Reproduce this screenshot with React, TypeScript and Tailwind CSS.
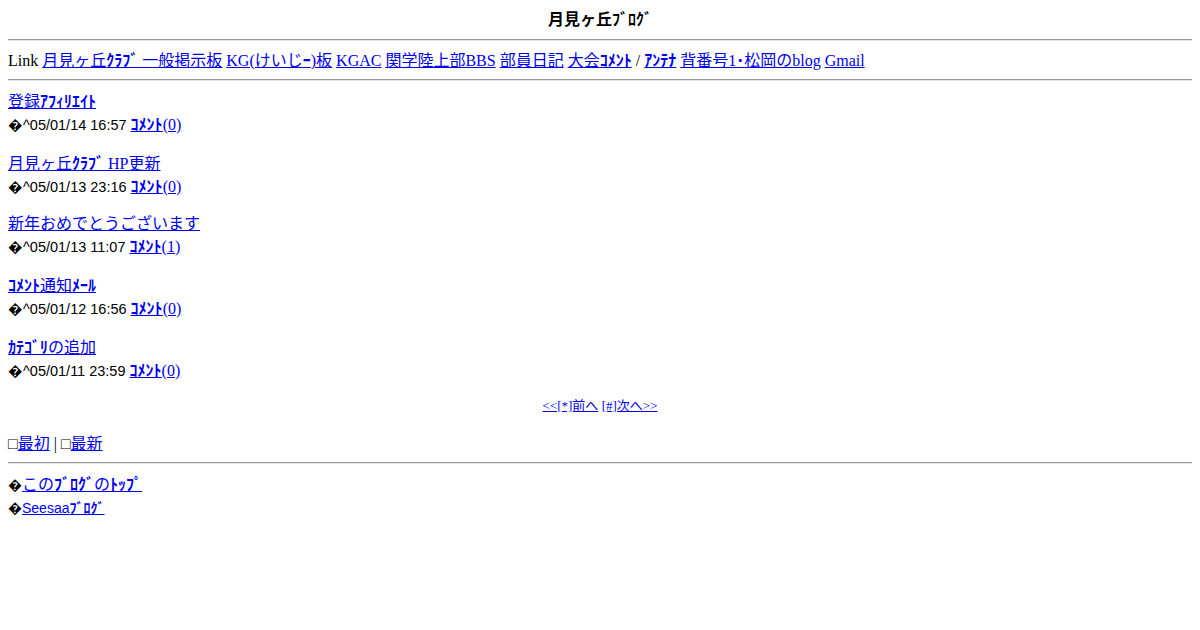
const serif = "font-['Liberation_Serif','Noto_Sans_CJK_JP',serif]";
const sans = "font-['Liberation_Sans','Noto_Sans_CJK_JP',sans-serif]";

// half-width katakana are drawn heavier in the reference
function K({ text }: { text: string }) {
  const parts = text.split(/([\uFF61-\uFF9F]+)/);
  return (
    <>
      {parts.map((p, i) =>
        /[\uFF61-\uFF9F]/.test(p) ? (
          <span key={i} className="font-semibold">{p}</span>
        ) : (
          p
        ),
      )}
    </>
  );
}

function A({ children, className = '' }: { children: string; className?: string }) {
  return (
    <a href="#" className={`text-[#0000ee] underline ${className}`}>
      <K text={children} />
    </a>
  );
}

function Hr({ className = '' }: { className?: string }) {
  return <div className={`h-[2px] border-t border-[#9a9a9a] border-b border-b-[#e6e6e6] ${className}`} />;
}

const entries = [
  { title: '登録ｱﾌｨﾘｴｲﾄ', date: '05/01/14 16:57', n: 0, mt: 'mt-[9px]' },
  { title: '月見ヶ丘ｸﾗﾌﾞ HP更新', date: '05/01/13 23:16', n: 0, mt: 'mt-[16px]' },
  { title: '新年おめでとうございます', date: '05/01/13 11:07', n: 1, mt: 'mt-[14px]' },
  { title: 'ｺﾒﾝﾄ通知ﾒｰﾙ', date: '05/01/12 16:56', n: 0, mt: 'mt-[16px]' },
  { title: 'ｶﾃｺﾞﾘの追加', date: '05/01/11 23:59', n: 0, mt: 'mt-[16px]' },
];

export default function App() {
  return (
    <div className={`w-[1200px] h-[630px] bg-white px-2 pt-2 text-black text-[16px] ${serif}`}>
      <div className={`h-[23px] leading-[23px] text-center font-bold ${sans}`}>月見ヶ丘ﾌﾞﾛｸﾞ</div>
      <Hr className="mt-[8px]" />
      <div className="mt-[8px] h-[23px] leading-[23px] whitespace-nowrap">
        Link <A>{'月見ヶ丘ｸﾗﾌﾞ '}</A> <A>一般掲示板</A> <A>KG(けいじｰ)板</A> <A>KGAC</A>{' '}
        <A>関学陸上部BBS</A> <A>部員日記</A> <A>大会ｺﾒﾝﾄ</A> / <A>ｱﾝﾃﾅ</A>{' '}
        <A>背番号1･松岡のblog</A> <A>Gmail</A>
      </div>
      <Hr className="mt-[7px]" />
      {entries.map((e) => (
        <div key={e.date} className={e.mt}>
          <div className="h-[23px] leading-[23px]">
            <A>{e.title}</A>
          </div>
          <div className="h-[23px] leading-[23px] whitespace-nowrap">
            <span className={`${sans} text-[14.5px]`}>{'\uFFFD'}^{e.date} </span>
            <A>{`ｺﾒﾝﾄ(${e.n})`}</A>
          </div>
        </div>
      ))}
      <div className="mt-[14px] h-[20px] leading-[20px] text-center text-[13px]">
        <A>{'<<[*]前へ'}</A> <A>{'[#]次へ>>'}</A>
      </div>
      <div className="mt-[16px] h-[23px] leading-[23px]">
        □<A>最初</A> | □<A>最新</A>
      </div>
      <Hr className="mt-[7px]" />
      <div className="mt-[9px] h-[23px] leading-[23px]">
        <span className="text-[14px]">{'\uFFFD'}</span>
        <A className={sans}>このﾌﾞﾛｸﾞのﾄｯﾌﾟ</A>
      </div>
      <div className="h-[23px] leading-[23px]">
        <span className="text-[14px]">{'\uFFFD'}</span>
        <A className={`${sans} text-[14px]`}>Seesaaﾌﾞﾛｸﾞ</A>
      </div>
    </div>
  );
}
